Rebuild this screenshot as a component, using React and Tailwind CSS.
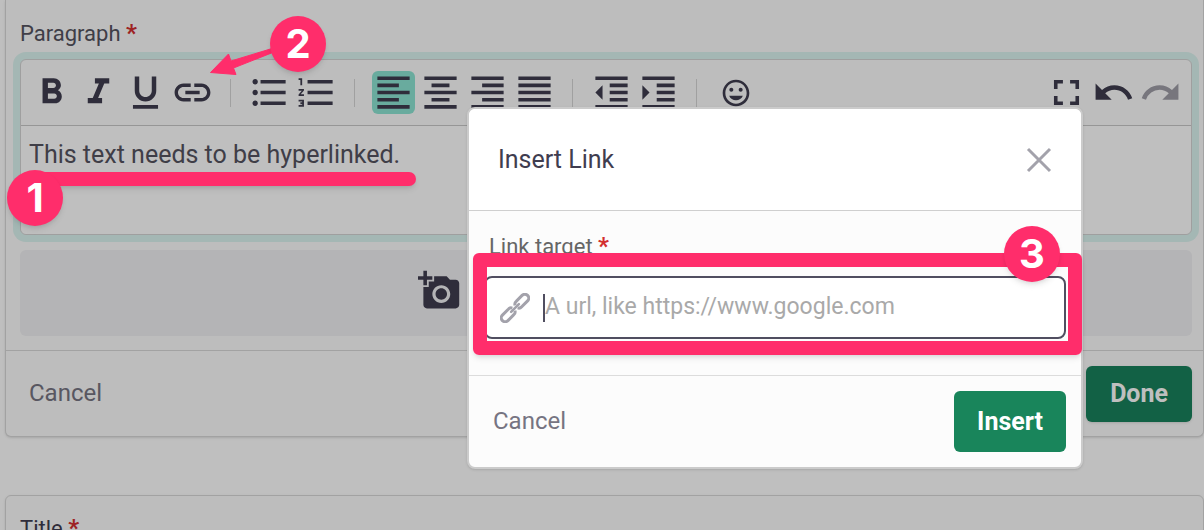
import {
    MdFormatBold,
    MdFormatItalic,
    MdFormatUnderlined,
    MdInsertLink,
    MdFormatListBulleted,
    MdFormatListNumbered,
    MdFormatAlignLeft,
    MdFormatAlignCenter,
    MdFormatAlignRight,
    MdFormatAlignJustify,
    MdFormatIndentDecrease,
    MdFormatIndentIncrease,
    MdInsertEmoticon,
    MdFullscreen,
    MdUndo,
    MdRedo,
    MdAddAPhoto,
} from "react-icons/md";

const toolGroups = [
    [
        { name: "Bold", icon: MdFormatBold },
        { name: "Italic", icon: MdFormatItalic },
        { name: "Underline", icon: MdFormatUnderlined },
        { name: "Insert link", icon: MdInsertLink },
    ],
    [
        { name: "Bulleted list", icon: MdFormatListBulleted },
        { name: "Numbered list", icon: MdFormatListNumbered },
    ],
    [
        { name: "Align left", icon: MdFormatAlignLeft, active: true },
        { name: "Align center", icon: MdFormatAlignCenter },
        { name: "Align right", icon: MdFormatAlignRight },
        { name: "Justify", icon: MdFormatAlignJustify },
    ],
    [
        { name: "Decrease indent", icon: MdFormatIndentDecrease },
        { name: "Increase indent", icon: MdFormatIndentIncrease },
    ],
    [{ name: "Emoji", icon: MdInsertEmoticon, small: true }],
];

const historyTools = [
    { name: "Fullscreen", icon: MdFullscreen },
    { name: "Undo", icon: MdUndo },
    { name: "Redo", icon: MdRedo, disabled: true },
];

function ToolButton({ tool }) {
    const Icon = tool.icon;
    return (
        <button
            type="button"
            aria-label={tool.name}
            disabled={tool.disabled}
            className={`flex size-[43px] items-center justify-center rounded-md ${tool.active ? "bg-[#8ce4d3]" : ""} ${
                tool.disabled ? "text-[#9f9ea7]" : "text-[#3f3d4f]"
            }`}
        >
            <Icon className={tool.small ? "size-8" : "size-[43px]"} />
        </button>
    );
}

function Toolbar() {
    return (
        <div className="flex justify-between border-b border-[#c8c8c8] px-[9px] py-[11px]">
            <div className="flex">
                {toolGroups.map((group, i) => (
                    <div key={i} className="flex items-center">
                        {i > 0 && <span className="mx-4 h-7 w-0.5 border-l border-[#d6d6d6]" />}
                        <div className="flex gap-1">
                            {group.map((tool) => (
                                <ToolButton key={tool.name} tool={tool} />
                            ))}
                        </div>
                    </div>
                ))}
            </div>
            <div className="flex gap-1">
                {historyTools.map((tool) => (
                    <ToolButton key={tool.name} tool={tool} />
                ))}
            </div>
        </div>
    );
}

function Required() {
    return <span className="text-2xl leading-none font-bold text-[#d32f2f]">*</span>;
}

function EditorCard() {
    return (
        <section className="rounded-b-md border-x border-b border-[#d9d9d9] bg-[#fcfcfc] shadow-sm">
            <div className="pb-[14px] pl-[14px] pr-[11px] pt-[21px]">
                <h2 className="mb-3 text-[22px] leading-[26px] text-[#55535f]">
                    Paragraph <Required />
                </h2>
                <div className="rounded-md border border-[#d4d4d4] bg-[#fcfcfc] ring-[7px] ring-[#dbf4f0]">
                    <Toolbar />
                    <div
                        contentEditable
                        suppressContentEditableWarning
                        role="textbox"
                        aria-label="Paragraph"
                        className="min-h-[108px] rounded-b-md bg-white px-2 py-[13px] text-[25px] leading-8 text-[#55535f] outline-none"
                    >
                        This text needs to be hyperlinked.
                    </div>
                </div>
                <div className="mt-[15px] flex h-[86px] items-center rounded-md bg-[#f0f0f3] pl-[398px]">
                    <button type="button" aria-label="Add photo" className="-mt-1.5 text-[#3f3d4f]">
                        <MdAddAPhoto className="size-[43px]" />
                    </button>
                </div>
            </div>
            <div className="flex items-center justify-between border-t border-[#d9d9d9] pb-[14px] pl-[14px] pr-[11px] pt-[15px]">
                <button type="button" className="px-[9px] pb-0.5 text-2xl text-[#767482]">
                    Cancel
                </button>
                <button type="button" className="h-14 rounded-md bg-[#19825c] px-6 text-[25px] font-bold text-white shadow-sm">
                    Done
                </button>
            </div>
        </section>
    );
}

function ChainIcon() {
    return (
        <svg viewBox="0 0 30 30" className="size-[30px]" fill="none" stroke="#a3a2ab" strokeWidth="3" aria-hidden="true">
            <g transform="rotate(45 15 15)">
                <path d="M13.200 13.100A3.900 3.900 0 0 1 11.100 9.400V1.100A3.900 3.900 0 0 1 18.900 1.100V9.400A3.900 3.900 0 0 1 16.800 13.100" />
                <path d="M16.800 16.900A3.900 3.900 0 0 1 18.900 20.600V28.900A3.900 3.900 0 0 1 11.100 28.900V20.600A3.900 3.900 0 0 1 13.200 16.900" />
                <path d="M15 9.500V20.500" strokeWidth="2.600" strokeLinecap="round" />
            </g>
        </svg>
    );
}

function InsertLinkModal() {
    return (
        <div
            role="dialog"
            aria-labelledby="modal-title"
            className="absolute left-[467px] top-[107px] w-[616px] overflow-hidden rounded-lg border-2 border-[#cbcbcb] bg-[#fcfcfc] shadow-sm"
        >
            <header className="flex items-center justify-between border-b border-[#cfcfcf] bg-white pb-8 pl-[29px] pr-[27px] pt-[33px]">
                <h1 id="modal-title" className="text-[25px] leading-9 text-[#3f3d4f]">
                    Insert Link
                </h1>
                <button type="button" aria-label="Close" className="text-[#a3a2ab]">
                    <svg viewBox="0 0 30 30" className="size-[30px]" fill="none" stroke="currentColor" strokeWidth="3">
                        <path d="M4 4 26 26M26 4 4 26" />
                    </svg>
                </button>
            </header>
            <div className="px-[15px] pb-9 pt-[23px]">
                <label htmlFor="link-target" className="block pl-[5px] text-[22px] leading-[26px] text-[#666]">
                    Link target <Required />
                </label>
                <div className="mt-4 flex h-[63px] items-center gap-[13px] rounded-lg border-2 border-[#504e60] bg-white px-[14px]">
                    <ChainIcon />
                    <div className="flex flex-1 items-center">
                        <span className="h-7 w-0.5 bg-[#504e60]" />
                        <input
                            id="link-target"
                            type="url"
                            placeholder="A url, like https://www.google.com"
                            className="min-w-0 flex-1 text-[23px] text-[#3f3d4f] outline-none placeholder:text-[#a9a9a9]"
                        />
                    </div>
                </div>
            </div>
            <footer className="flex items-center justify-between border-t border-[#dcdcdc] px-[15px] py-[15px]">
                <button type="button" className="px-[9px] pb-0.5 text-2xl text-[#767482]">
                    Cancel
                </button>
                <button type="button" className="h-[61px] rounded-md bg-[#19855b] px-[23px] text-[25px] font-bold text-white">
                    Insert
                </button>
            </footer>
        </div>
    );
}

function Step({ number, className }) {
    return (
        <span
            className={`absolute flex size-14 items-center justify-center rounded-full bg-[#ff2d6b] font-[Inter,sans-serif] text-[40px] font-bold leading-none text-white shadow-md ${className}`}
        >
            {number}
        </span>
    );
}

function Annotations() {
    return (
        <div className="pointer-events-none absolute inset-0">
            <div className="absolute left-9 top-[172px] h-[14px] w-[380px] rounded-full bg-[#ff2d6b] shadow-md" />
            <Step number={1} className="left-[7px] top-[170px]" />
            <svg viewBox="0 0 90 50" className="absolute left-[200px] top-[30px] h-[50px] w-[90px]" fill="#ff2d6b">
                <path
                    d="M10.500 42.500 28.500 24 31 31 72 18.500 74 22 33.500 38 36 44.500Z"
                    stroke="#ff2d6b"
                    strokeWidth="1"
                    strokeLinejoin="round"
                />
            </svg>
            <Step number={2} className="left-[270px] top-4" />
            <div className="absolute left-[473px] top-[253px] h-[102px] w-[609px] rounded-md border-[14px] border-[#ff2d6b] shadow-md" />
            <Step number={3} className="left-[1004px] top-[226px]" />
        </div>
    );
}

export default function App() {
    return (
        <div className="relative h-screen overflow-hidden bg-white font-[Roboto,sans-serif]">
            <main className="pl-[5px]">
                <EditorCard />
                <section className="mt-[58px] rounded-md border border-[#d9d9d9] bg-[#fcfcfc] px-[14px] py-5 shadow-sm">
                    <h2 className="text-[22px] leading-[26px] text-[#3f3d4f]">
                        Title <Required />
                    </h2>
                </section>
            </main>
            <div className="absolute inset-0 bg-black/25" />
            <InsertLinkModal />
            <Annotations />
        </div>
    );
}
